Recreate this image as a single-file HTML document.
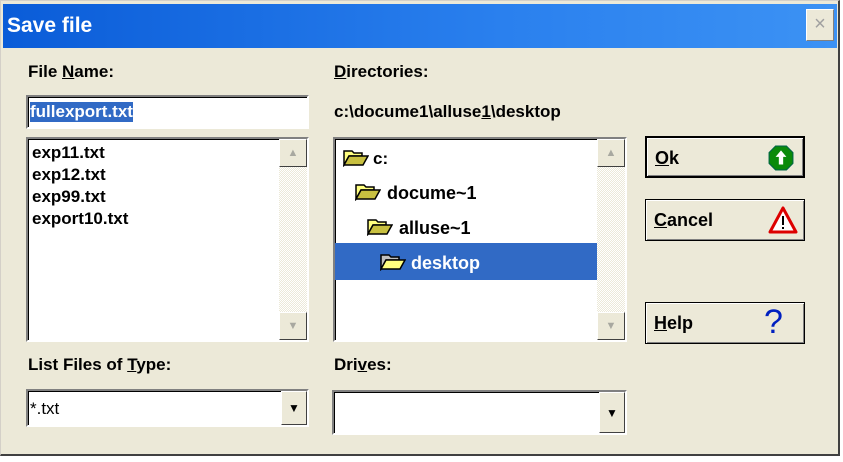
<!DOCTYPE html>
<html><head><style>
*{margin:0;padding:0;box-sizing:border-box}
body{width:843px;height:462px;background:#fff;font-family:"Liberation Sans",sans-serif;overflow:hidden;position:relative}
.win{position:absolute;left:0;top:0;width:840px;height:456px;background:#ece9d8;border:1px solid #d4d0c8;border-right:2px solid #404040;border-bottom:2px solid #404040}
.title{position:absolute;left:2px;top:3px;width:834px;height:44px;background:linear-gradient(90deg,#0a5cd8,#2a80ee 60%,#3c92f4)}
.title span{position:absolute;left:4px;top:10px;color:#fff;font-weight:bold;font-size:21px}
.close{position:absolute;left:805px;top:8px;width:28px;height:32px;background:#ece9d8;border:1px solid #fff;border-right-color:#808080;border-bottom-color:#808080;color:#a0a0a0;font-size:20px;text-align:center;line-height:28px}
.t{position:absolute;font-weight:bold;font-size:17px;color:#000;white-space:nowrap}
.u{text-decoration:underline}
.sunk{position:absolute;background:#fff;border:2px solid;border-color:#808080 #fff #fff #808080;box-shadow:inset 1px 1px 0 #000}
.sb{position:absolute;right:0;top:0;width:28px;height:100%;background:repeating-conic-gradient(#ece9d8 0 25%,#fff 0 50%) 0 0/2px 2px}
.arr{position:absolute;left:0;width:28px;height:28px;background:#ece9d8;border:1px solid #fff;border-right-color:#404040;border-bottom-color:#404040;color:#a8a8a0;font-size:11px;text-align:center;line-height:26px}
.btn{position:absolute;left:645px;width:160px;height:42px;background:#ece9d8;border:1px solid #000;box-shadow:inset 1px 1px 0 #fff,inset -1px -1px 0 #808080}
.btn .t{left:8px;top:10px;font-size:18px}
.cb{position:absolute;right:0;top:0;width:26px;height:100%;background:#ece9d8;border:1px solid #fff;border-right-color:#404040;border-bottom-color:#404040;font-size:12px;text-align:center}
.f{position:absolute}
</style></head><body>
<div class="win">
<div class="title"><span>Save file</span></div>
<div class="close">×</div>
</div>

<div class="t" style="left:28px;top:62px">File <span class="u">N</span>ame:</div>
<div class="t" style="left:334px;top:62px"><span class="u">D</span>irectories:</div>

<div class="sunk" style="left:26px;top:95px;width:283px;height:34px"><span class="t" style="left:2px;top:5px;background:#316ac5;color:#fff;font-weight:bold">fullexport.txt</span></div>
<div class="t" style="left:334px;top:102px">c:\docume1\alluse<span class="u">1</span>\desktop</div>

<div class="sunk" style="left:26px;top:137px;width:283px;height:205px">
<div class="t" style="left:4px;top:3px;line-height:22px">exp11.txt<br>exp12.txt<br>exp99.txt<br>export10.txt</div>
<div class="sb"><div class="arr" style="top:0">▲</div><div class="arr" style="bottom:0">▼</div></div>
</div>

<div class="sunk" style="left:333px;top:137px;width:294px;height:205px">
<div style="position:absolute;left:0;top:104px;width:262px;height:37px;background:#316ac5"></div>
<svg class="f" style="left:8px;top:8px" width="26" height="20" viewBox="0 0 26 20"><path d="M1 4h8l2 2h8v3H6L1 18z" fill="#ffff80" stroke="#000" stroke-width="1.5"/><path d="M1 18L6 9h19l-5 9z" fill="#c8c040" stroke="#000" stroke-width="1.5"/></svg>
<div class="t" style="left:38px;top:10px">c:</div>
<svg class="f" style="left:20px;top:42px" width="26" height="20" viewBox="0 0 26 20"><path d="M1 4h8l2 2h8v3H6L1 18z" fill="#ffff80" stroke="#000" stroke-width="1.5"/><path d="M1 18L6 9h19l-5 9z" fill="#c8c040" stroke="#000" stroke-width="1.5"/></svg>
<div class="t" style="left:52px;top:44px;font-size:18px">docume~1</div>
<svg class="f" style="left:32px;top:77px" width="26" height="20" viewBox="0 0 26 20"><path d="M1 4h8l2 2h8v3H6L1 18z" fill="#ffff80" stroke="#000" stroke-width="1.5"/><path d="M1 18L6 9h19l-5 9z" fill="#c8c040" stroke="#000" stroke-width="1.5"/></svg>
<div class="t" style="left:64px;top:79px;font-size:18px">alluse~1</div>
<svg class="f" style="left:45px;top:112px" width="26" height="20" viewBox="0 0 26 20"><path d="M1 4h8l2 2h8v3H6L1 18z" fill="#c0c0c0" stroke="#000" stroke-width="1.5"/><path d="M1 18L6 9h19l-5 9z" fill="#ffff80" stroke="#000" stroke-width="1.5"/></svg>
<div class="t" style="left:76px;top:114px;font-size:18px;color:#fff">desktop</div>
<div class="sb"><div class="arr" style="top:0">▲</div><div class="arr" style="bottom:0">▼</div></div>
</div>

<div class="btn" style="top:136px;border-width:2px"><span class="t"><span class="u">O</span>k</span>
<svg class="f" style="left:121px;top:7px" width="26" height="26" viewBox="0 0 24 24"><polygon points="7,1 17,1 23,7 23,17 17,23 7,23 1,17 1,7" fill="#0a8a0a" stroke="#064" /><path d="M12 5l-5 6h3v7h4v-7h3z" fill="#fff"/></svg></div>
<div class="btn" style="top:199px"><span class="t"><span class="u">C</span>ancel</span>
<svg class="f" style="left:122px;top:6px" width="30" height="28" viewBox="0 0 30 28"><path d="M15 2L28 26H2z" fill="#fff" stroke="#d00" stroke-width="3" stroke-linejoin="round"/><rect x="14" y="10" width="2" height="9" fill="#000"/><rect x="14" y="21" width="2" height="2" fill="#000"/></svg></div>
<div class="btn" style="top:302px"><span class="t"><span class="u">H</span>elp</span>
<div class="t" style="left:118px;top:0px;font-size:34px;font-weight:normal;color:#0020c0">?</div></div>

<div class="t" style="left:28px;top:355px">List Files of <span class="u">T</span>ype:</div>
<div class="t" style="left:334px;top:355px">Dri<span class="u">v</span>es:</div>

<div class="sunk" style="left:26px;top:389px;width:283px;height:38px"><span class="t" style="left:2px;top:8px;font-weight:normal">*.txt</span><div class="cb" style="line-height:32px">▼</div></div>
<div class="sunk" style="left:332px;top:390px;width:295px;height:45px"><div class="cb" style="line-height:40px">▼</div></div>
</body></html>
